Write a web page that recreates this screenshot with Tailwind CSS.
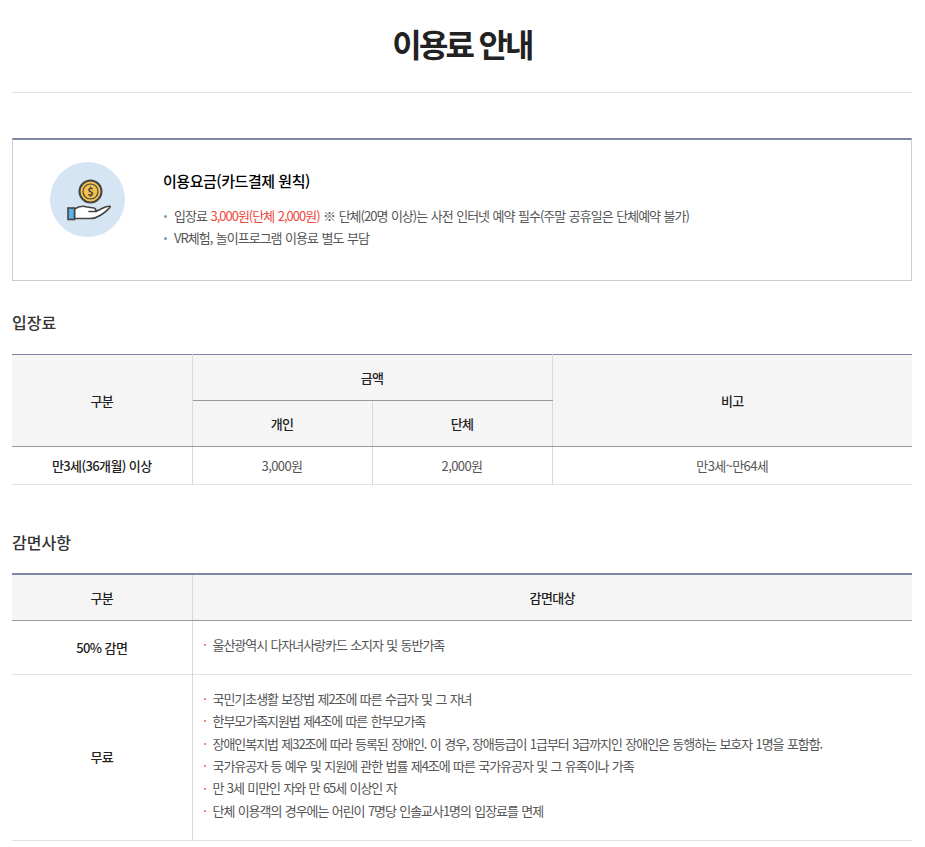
<!DOCTYPE html>
<html lang="ko">
<head>
  <meta charset="UTF-8" />
  <title>이용료 안내</title>
  <script src="https://cdn.jsdelivr.net/npm/@tailwindcss/browser@4"></script>
</head>
<body class="bg-white font-['Noto_Sans_CJK_KR','Noto_Sans',sans-serif] text-[13px] text-[#555]">
  <div class="w-[900px] ml-3 h-[847px] overflow-hidden">
    <!-- Title -->
    <div class="h-[93px] border-b border-[#e3e3e3] pt-[21px] text-center">
      <h1 class="text-[32px] leading-[44px] font-bold text-[#222] tracking-[-2.8px]">이용료 안내</h1>
    </div>

    <!-- Notice box -->
    <div class="mt-[45px] h-[143px] border border-[#ccc] border-t-2 border-t-[#7d87a5] flex pl-[37px] pt-[22px]">
      <div class="w-[75px] h-[75px] rounded-full bg-[#d6e5f3] flex items-center justify-center shrink-0">
        <svg width="46" height="46" viewBox="0 0 46 46">
          <circle cx="25.5" cy="14.5" r="11" fill="#f5c14e" stroke="#444" stroke-width="2" />
          <circle cx="25.5" cy="14.5" r="7.5" fill="#f5c14e" stroke="#444" stroke-width="1.2" />
          <text x="25.5" y="18.5" text-anchor="middle" font-size="11" font-weight="700" fill="#444">$</text>
          <path d="M9.5 32 C14 29 18 28.5 22 30 L29 31 C31.5 31.5 31.5 34.5 29 34.5 L24 34.5 L31 34.5 L38 31 C41 29.5 44 29 45.5 29.5 C43 33 39 36 35 38.5 C32 40.5 29 41.5 25 41.5 L9.5 41.5 Z" fill="#fff" stroke="#444" stroke-width="1.6" stroke-linejoin="round" />
          <rect x="3" y="31" width="6.5" height="11.5" fill="#5fb0e5" stroke="#444" stroke-width="1.6" />
        </svg>
      </div>
      <div class="ml-[38px]">
        <h3 class="text-[15px] leading-[22px] font-medium text-black mt-[8px] tracking-[-0.46px]">이용요금(카드결제 원칙)</h3>
        <ul class="mt-[13px] leading-[22px] tracking-[-1px] [word-spacing:0.9px]">
          <li class="flex items-center">
            <span class="w-[3px] h-[3px] rounded-full bg-[#7d99b5] ml-px mr-[7px]"></span>
            <span>입장료 <span class="text-[#f0483e]">3,000원(단체 2,000원)</span> ※ 단체(20명 이상)는 사전 인터넷 예약 필수(주말 공휴일은 단체예약 불가)</span>
          </li>
          <li class="flex items-center">
            <span class="w-[3px] h-[3px] rounded-full bg-[#7d99b5] ml-px mr-[7px]"></span>
            <span>VR체험, 놀이프로그램 이용료 별도 부담</span>
          </li>
        </ul>
      </div>
    </div>

    <!-- Admission -->
    <h2 class="mt-[29px] text-[16px] leading-[24px] font-medium text-[#333]">입장료</h2>
    <table class="mt-[20px] w-full table-fixed border-collapse border-t border-t-[#7d87a5] text-center tracking-[-0.6px]">
      <colgroup>
        <col class="w-[180px]" /><col class="w-[180px]" /><col class="w-[180px]" /><col class="w-[360px]" />
      </colgroup>
      <thead class="bg-[#f5f5f5] text-[#222]">
        <tr class="h-[46px]">
          <th rowspan="2" class="font-medium border-r border-[#d9d9d9] border-b border-b-[#999]">구분</th>
          <th colspan="2" class="font-medium border-r border-r-[#d9d9d9] border-b border-b-[#999]">금액</th>
          <th rowspan="2" class="font-medium border-b border-b-[#999]">비고</th>
        </tr>
        <tr class="h-[46px]">
          <th class="font-medium border-r border-r-[#d9d9d9] border-b border-b-[#999]">개인</th>
          <th class="font-medium border-r border-r-[#d9d9d9] border-b border-b-[#999]">단체</th>
        </tr>
      </thead>
      <tbody>
        <tr class="h-[38px] border-b border-[#e3e3e3]">
          <td class="font-medium text-[#222] border-r border-[#d9d9d9]">만3세(36개월) 이상</td>
          <td class="border-r border-[#d9d9d9]">3,000원</td>
          <td class="border-r border-[#d9d9d9]">2,000원</td>
          <td>만3세~만64세</td>
        </tr>
      </tbody>
    </table>

    <!-- Reductions -->
    <h2 class="mt-[45px] text-[16px] leading-[24px] font-medium text-[#333]">감면사항</h2>
    <table class="mt-[19px] w-full table-fixed border-collapse border-t-2 border-t-[#7d87a5] text-center">
      <colgroup>
        <col class="w-[180px]" /><col class="w-[720px]" />
      </colgroup>
      <thead class="bg-[#f5f5f5] text-[#222] tracking-[-0.6px]">
        <tr class="h-[46px]">
          <th class="font-medium border-r border-[#d9d9d9] border-b border-b-[#999]">구분</th>
          <th class="font-medium border-b border-b-[#999]">감면대상</th>
        </tr>
      </thead>
      <tbody>
        <tr class="h-[54px] border-b border-[#e3e3e3]">
          <td class="font-medium text-[#222] border-r border-[#d9d9d9] pt-[2px] tracking-[-0.6px]">50% 감면</td>
          <td class="text-left pl-[11px] pb-[4px] tracking-[-1.05px] [word-spacing:0.8px]">
            <div class="flex items-center"><span class="w-[2px] h-[2px] rounded-full bg-[#e8604c] mr-[7px]"></span>울산광역시 다자녀사랑카드 소지자 및 동반가족</div>
          </td>
        </tr>
        <tr class="h-[166px] border-b border-[#e3e3e3]">
          <td class="font-medium text-[#222] border-r border-[#d9d9d9] tracking-[-0.6px]">무료</td>
          <td class="text-left pl-[11px] tracking-[-1.05px] [word-spacing:0.8px]">
            <ul class="leading-[22.4px] pb-[4px]">
              <li class="flex items-center"><span class="w-[2px] h-[2px] rounded-full bg-[#e8604c] mr-[7px]"></span>국민기초생활 보장법 제2조에 따른 수급자 및 그 자녀</li>
              <li class="flex items-center"><span class="w-[2px] h-[2px] rounded-full bg-[#e8604c] mr-[7px]"></span>한부모가족지원법 제4조에 따른 한부모가족</li>
              <li class="flex items-center"><span class="w-[2px] h-[2px] rounded-full bg-[#e8604c] mr-[7px]"></span>장애인복지법 제32조에 따라 등록된 장애인. 이 경우, 장애등급이 1급부터 3급까지인 장애인은 동행하는 보호자 1명을 포함함.</li>
              <li class="flex items-center"><span class="w-[2px] h-[2px] rounded-full bg-[#e8604c] mr-[7px]"></span>국가유공자 등 예우 및 지원에 관한 법률 제4조에 따른 국가유공자 및 그 유족이나 가족</li>
              <li class="flex items-center"><span class="w-[2px] h-[2px] rounded-full bg-[#e8604c] mr-[7px]"></span>만 3세 미만인 자와 만 65세 이상인 자</li>
              <li class="flex items-center"><span class="w-[2px] h-[2px] rounded-full bg-[#e8604c] mr-[7px]"></span>단체 이용객의 경우에는 어린이 7명당 인솔교사1명의 입장료를 면제</li>
            </ul>
          </td>
        </tr>
      </tbody>
    </table>
  </div>
</body>
</html>
